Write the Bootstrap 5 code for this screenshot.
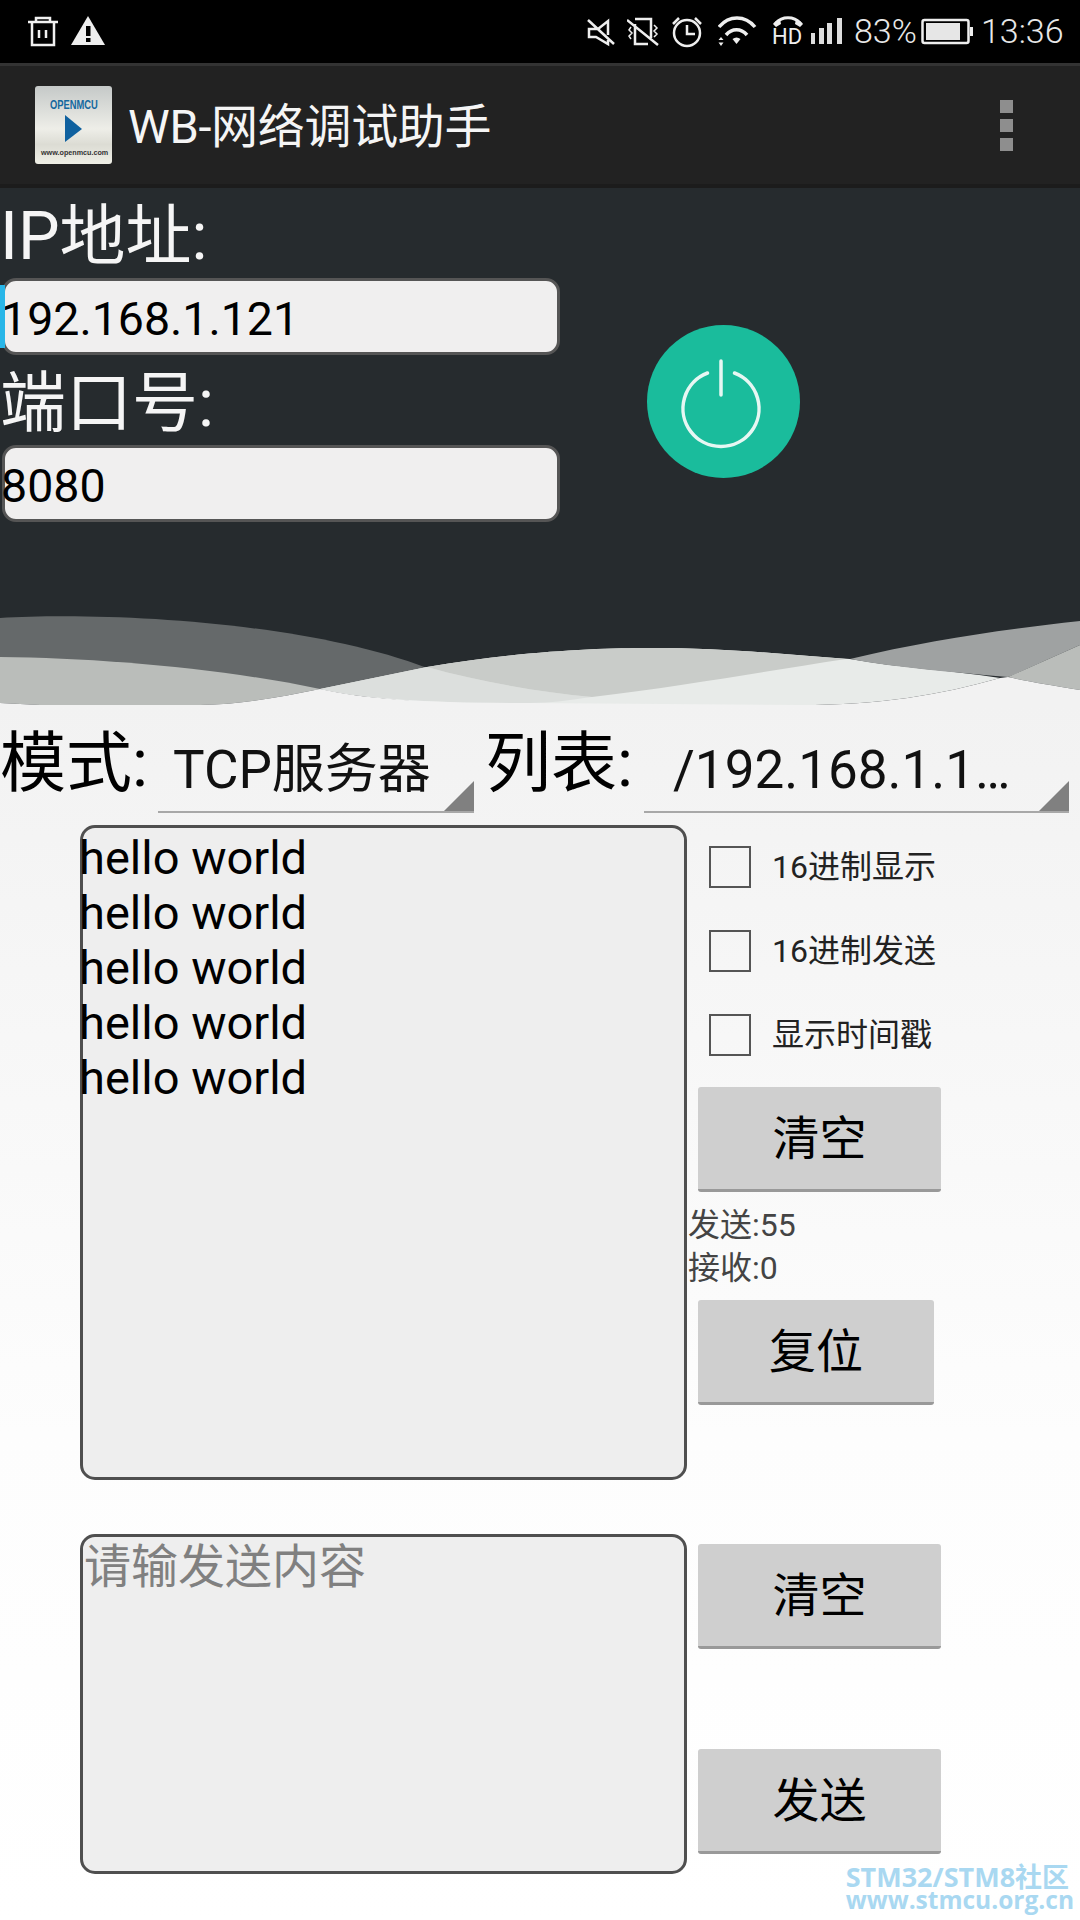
<!DOCTYPE html>
<html lang="zh-CN">
<head>
    <meta charset="UTF-8">
    <meta name="viewport" content="width=device-width, initial-scale=1.0">
    <title>WB-网络调试助手</title>
    <link href="https://cdn.jsdelivr.net/npm/bootstrap@5.3.0/dist/css/bootstrap.min.css" rel="stylesheet">
    <style>
        body {
            width: 1080px;
            height: 1920px;
            overflow: hidden;
            position: relative;
            background: #f2f2f2;
            font-family: Roboto, "Noto Sans CJK SC", sans-serif;
            color: #000;
        }
        svg { display: block; flex: none; }

        /* status bar */
        .status-bar { height: 63px; background: #000; color: #e8e8e8; }
        .status-left { padding-left: 28px; }
        .status-right { padding-right: 18px; }
        .status-pct { width: 67px; font-size: 34px; font-weight: 300; line-height: 63px; }
        .status-time { width: 81px; font-size: 34px; font-weight: 300; line-height: 63px; }

        /* action bar */
        .action-bar {
            height: 125px;
            background: #222;
            border-top: 3px solid #333;
            border-bottom: 4px solid #1c1c1c;
            padding-left: 35px;
            padding-right: 67px;
        }
        .app-title { font-size: 47px; color: #f5f5f5; margin-left: 16px; padding-top: 5px; letter-spacing: -.3px; }
        .overflow-dot { width: 13px; height: 13px; background: #8e8e8e; margin-top: 6px; }
        .overflow-menu { margin-top: -5px; }

        /* dark top panel */
        .top-panel { background: #262b2e; }
        .conn-form { width: 560px; padding-left: 2px; padding-bottom: 78px; }
        .conn-label { font-size: 66px; line-height: 90px; color: #f5f5f5; height: 90px; padding-top: 4px; margin-left: -2px; white-space: nowrap; }
        .conn-field {
            height: 77px;
            font-size: 46.500px;
            line-height: 66px;
            padding: 5px 0 0 0;
            background: #f0efef;
            border: 3px solid #555;
            border-radius: 14px;
            color: #000;
        }
        .conn-value { display: inline-block; margin-left: -4px; }
        .field-wrap { position: relative; }
        .text-cursor { position: absolute; left: -2px; top: 7px; width: 5px; height: 63px; background: #29b6e8; }
        .power-wrap { padding: 137px 0 0 87px; }

        /* mode row */
        .lower-part { height: 1215px; background: linear-gradient(#f2f2f2, #fdfdfd 60%, #fff); }
        .mode-row { height: 108px; }
        .mode-label { font-size: 66px; line-height: 60px; padding-top: 29px; white-space: nowrap; }
        .mode-label-a { width: 158px; }
        .mode-label-b { width: 159px; margin-left: 11px; }
        .spinner-box {
            position: relative;
            height: 108px;
            border-bottom: 2px solid #a8a8a8;
            font-size: 53px;
            line-height: 56px;
            padding-top: 37px;
            color: #111;
            white-space: nowrap;
        }
        .spinner-a { width: 316px; padding-left: 15px; }
        .spinner-b { width: 425px; padding-left: 29px; }
        .spinner-box::after {
            content: "";
            position: absolute;
            right: 0;
            bottom: 0;
            border-left: 30px solid transparent;
            border-bottom: 30px solid #808080;
        }

        /* send and receive areas */
        .io-part { padding: 12px 0 0 80px; }
        .io-box {
            width: 607px;
            background: #eee;
            border: 3px solid #4f4f4f;
            border-radius: 15px;
            padding: 2px 0 0 0;
            font-size: 47px;
            line-height: 55px;
            color: #000;
        }
        .io-lines { margin-left: -4px; }
        .io-box-recv { height: 655px; }
        .io-box-send { height: 340px; margin-top: 54px; padding-left: 1px; font-size: 47px; color: #808080; }
        .side-col { padding-left: 3px; }
        .check-row { height: 84px; padding-left: 19px; font-size: 32px; color: #222; }
        .square-check.form-check-input {
            width: 42px;
            height: 42px;
            margin: 0 21px 0 0;
            border: 2px solid #555;
            border-radius: 0;
            background-color: transparent;
        }
        .gray-btn {
            display: block;
            width: 243px;
            height: 105px;
            margin-left: 8px;
            padding: 2px 0 0 0;
            background: #cfcfcf;
            border: 0;
            border-bottom: 3px solid #999;
            border-radius: 3px;
            font-size: 47px;
            color: #000;
        }
        .gray-btn-narrow { width: 236px; margin-top: 10px; }
        .gray-btn-first { margin-top: 10px; }
        .btn-send-clear { margin-top: 64px; }
        .btn-send { margin-top: 100px; }
        .counter-text { margin: 12px 0 2px -2px; font-size: 32px; line-height: 43px; color: #444; }

        /* forum watermark over the page */
        .watermark {
            position: absolute;
            right: 6px;
            bottom: 9px;
            font-family: "Open Sans", "Noto Sans CJK SC", sans-serif;
            font-weight: 700;
            color: #a9d8f1;
        }
        .watermark-a { font-size: 27px; line-height: 25px; }
        .watermark-b { font-size: 24.500px; line-height: 22px; }
    </style>
</head>
<body>
    <!-- status bar -->
    <div class="status-bar d-flex justify-content-between">
        <div class="status-left d-flex">
            <svg width="43" height="63" viewBox="0 0 43 63" fill="none" stroke="#f0f0f0" stroke-width="2.5">
                <path d="M0 22H30M8 22V18H22V22M4 22V45H26V22M11 30V38M18 30V38"/>
            </svg>
            <svg width="34" height="63" viewBox="0 0 34 63">
                <path d="M17 16L34 45H0Z" fill="#eee"/>
                <path d="M15 26H19.500V36H15ZM15 38H19.500V42H15Z" fill="#000"/>
            </svg>
        </div>
        <div class="status-right d-flex">
            <svg width="41" height="63" viewBox="0 0 41 63" fill="none" stroke="#eee" stroke-width="2.500">
                <path d="M22 35V21L12 29H3V37H10L22 44V40M2 20L28 44"/>
            </svg>
            <svg width="45" height="63" viewBox="0 0 45 63" fill="none" stroke="#eee" stroke-width="2.500">
                <path d="M8 24V44H21M24 38V19H8M0 20L31 45"/>
                <path d="M4 27L2 30L5 33L2 36L4 39M27 25L30 28L27 31L30 34L27 37" stroke-width="1.500"/>
            </svg>
            <svg width="46" height="63" viewBox="0 0 46 63" fill="none" stroke="#eee" stroke-width="2.500">
                <circle cx="15" cy="33" r="13"/>
                <path d="M15 25V34H23M1 24L7 18M23 18L29 24"/>
            </svg>
            <svg width="54" height="63" viewBox="0 0 54 63" fill="none" stroke="#eee" stroke-width="3.500">
                <path d="M1 27C11 15 27 15 37 27M8 35C14 28 23 28 29 35"/>
                <path d="M14.500 39C17 37 20 37 22.500 39L18.500 44Z" fill="#eee" stroke="none"/>
                <path d="M0.500 40H5.500L3 37ZM0.500 42.500H5.500L3 46Z" fill="#eee" stroke="none"/>
            </svg>
            <svg width="38" height="63" viewBox="0 0 38 63" fill="none" stroke="#eee">
                <path d="M4 23C10 16 22 16 28 23" stroke-width="3"/>
                <path d="M1 24C2 22 5 20 8 19L9 24L4 27ZM31 24C30 22 27 20 24 19L23 24L28 27Z" fill="#eee" stroke="none"/>
                <text x="0" y="44" fill="#eee" stroke="none" font-family="Roboto, sans-serif" font-size="22">HD</text>
            </svg>
            <svg width="44" height="63" viewBox="0 0 44 63" fill="#ddd">
                <path d="M1 33H5V44H1ZM9 28H14V44H9ZM17 23H22V44H17ZM27 18H32V44H27Z"/>
            </svg>
            <div class="status-pct">83%</div>
            <svg width="60" height="63" viewBox="0 0 60 63" fill="none" stroke="#eee" stroke-width="2.500">
                <rect x="1.500" y="20" width="46" height="23" rx="2"/>
                <rect x="5" y="23" width="34" height="17" fill="#e6e6e6" stroke="none"/>
                <rect x="49" y="27" width="3" height="9" fill="#eee" stroke="none"/>
            </svg>
            <div class="status-time">13:36</div>
        </div>
    </div>

    <!-- action bar -->
    <div class="action-bar d-flex align-items-center">
        <svg width="77" height="78" viewBox="0 0 77 78">
            <defs>
                <linearGradient id="logoFill" x1="0" y1="0" x2="0" y2="1">
                    <stop offset="0" stop-color="#c5c9c8"/>
                    <stop offset=".55" stop-color="#eeeee8"/>
                    <stop offset=".75" stop-color="#dcdcd4"/>
                    <stop offset="1" stop-color="#efefe6"/>
                </linearGradient>
            </defs>
            <rect width="77" height="78" rx="3" fill="url(#logoFill)"/>
            <text transform="translate(15 23) scale(.72 1)" font-family="'Liberation Sans', sans-serif" font-weight="700" font-size="13" fill="#14689f">OPENMCU</text>
            <path d="M30 29L47 43L30 56Z" fill="#0f619f"/>
            <text x="6" y="69" font-family="'Liberation Sans', sans-serif" font-weight="700" font-size="7.200" fill="#333">www.openmcu.com</text>
        </svg>
        <div class="app-title flex-grow-1">WB-网络调试助手</div>
        <div class="overflow-menu">
            <div class="overflow-dot"></div>
            <div class="overflow-dot"></div>
            <div class="overflow-dot"></div>
        </div>
    </div>

    <!-- connection panel -->
    <div class="top-panel">
        <div class="d-flex">
            <div class="conn-form">
                <div class="conn-label">IP地址:</div>
                <div class="field-wrap">
                    <div class="form-control conn-field"><span class="conn-value">192.168.1.121</span></div>
                    <span class="text-cursor"></span>
                </div>
                <div class="conn-label">端口号:</div>
                <div class="form-control conn-field"><span class="conn-value">8080</span></div>
            </div>
            <div class="power-wrap">
                <svg width="153" height="153" viewBox="0 0 153 153" fill="none">
                    <circle cx="76.500" cy="76.500" r="76.500" fill="#1abc9c"/>
                    <path d="M60.500 48A38 38 0 1 0 87.500 48M74 36V70" stroke="#e6f7f3" stroke-width="3.500" stroke-linecap="round"/>
                </svg>
            </div>
        </div>
        <svg width="1080" height="105" viewBox="0 600 1080 105">
            <path d="M0 618C100 612 300 620 427 668L320 690L0 690Z" fill="#65696a"/>
            <path d="M0 657C100 658 220 668 320 689C280 697 240 705 200 705H40L0 703Z" fill="#babdba"/>
            <path d="M320 689L427 667C520 651 600 648 650 648C730 648 790 655 850 659C900 668 950 670 1000 678C940 695 880 705 800 705H500C430 703 370 700 320 689Z" fill="#e8ebe9"/>
            <path d="M320 689L427 667C480 682 540 692 592 697C570 700 550 703 530 703C450 704 370 700 320 689Z" fill="#dcdfdd"/>
            <path d="M427 667C520 651 600 648 650 648C730 648 790 655 846 659C760 672 690 685 592 697C540 692 480 682 427 667Z" fill="#c9ccc9"/>
            <path d="M850 659C930 640 1000 630 1080 621V645C1050 658 1030 668 1008 677C950 672 900 668 850 659Z" fill="#9fa2a2"/>
            <path d="M1008 677L1080 645V690C1050 685 1030 682 1008 677Z" fill="#babdba"/>
            <path d="M0 703L40 705H200C240 705 280 697 320 689C370 700 430 703 530 703L800 705C880 705 940 695 1000 678L1008 677C1030 682 1050 685 1080 690V705H0Z" fill="#f2f2f2"/>
        </svg>
    </div>

    <div class="lower-part">
        <div class="mode-row d-flex">
            <div class="mode-label mode-label-a">模式:</div>
            <div class="spinner-box spinner-a">TCP服务器</div>
            <div class="mode-label mode-label-b">列表:</div>
            <div class="spinner-box spinner-b">/192.168.1.1…</div>
        </div>

        <div class="io-part">
            <div class="d-flex">
                <div class="form-control io-box io-box-recv">
                    <div class="io-lines">hello world<br>hello world<br>hello world<br>hello world<br>hello world</div>
                </div>
                <div class="side-col">
                    <label class="check-row d-flex align-items-center">
                        <input class="form-check-input square-check" type="checkbox">16进制显示
                    </label>
                    <label class="check-row d-flex align-items-center">
                        <input class="form-check-input square-check" type="checkbox">16进制发送
                    </label>
                    <label class="check-row d-flex align-items-center">
                        <input class="form-check-input square-check" type="checkbox">显示时间戳
                    </label>
                    <button class="btn gray-btn gray-btn-first" type="button">清空</button>
                    <div class="counter-text">发送:55<br>接收:0</div>
                    <button class="btn gray-btn gray-btn-narrow" type="button">复位</button>
                </div>
            </div>
            <div class="d-flex">
                <div class="form-control io-box io-box-send">请输发送内容</div>
                <div class="side-col">
                    <button class="btn gray-btn btn-send-clear" type="button">清空</button>
                    <button class="btn gray-btn btn-send" type="button">发送</button>
                </div>
            </div>
        </div>
    </div>

    <div class="watermark">
        <div class="watermark-a">STM32/STM8社区</div>
        <div class="watermark-b">www.stmcu.org.cn</div>
    </div>

    <script src="https://cdn.jsdelivr.net/npm/bootstrap@5.3.0/dist/js/bootstrap.bundle.min.js"></script>
</body>
</html>
